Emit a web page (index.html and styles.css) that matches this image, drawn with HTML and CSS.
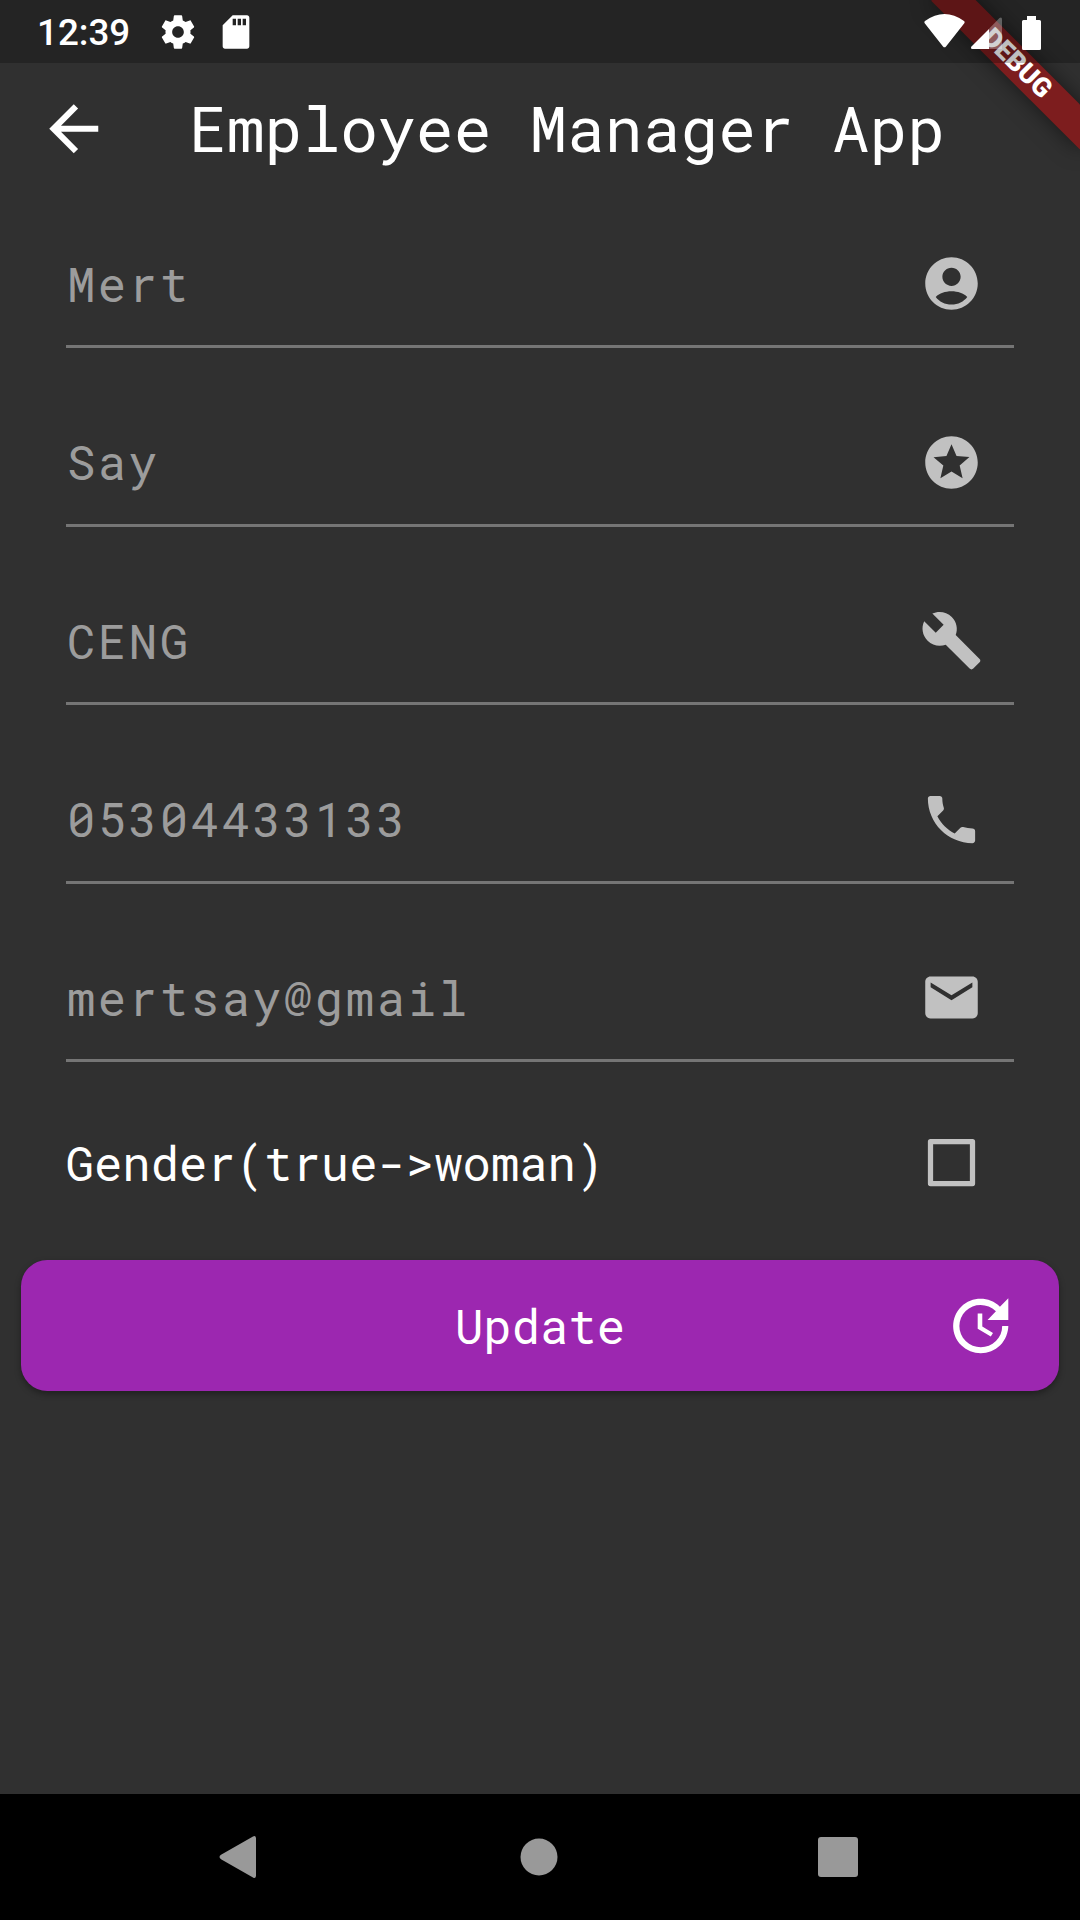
FILE: index.html
```html
<!DOCTYPE html>
<html lang="en">
<head>
<meta charset="utf-8">
<title>Employee Manager App</title>
<link rel="stylesheet" href="styles.css">
</head>
<body>
<div class="screen">
  <header class="status-bar">
    <span class="clock">12:39</span>
    <svg class="status-icon gear" viewBox="0 0 24 24"><path d="M19.43 12.98c.04-.32.07-.64.07-.98s-.03-.66-.07-.98l2.11-1.65c.19-.15.24-.42.12-.64l-2-3.46c-.12-.22-.39-.3-.61-.22l-2.49 1c-.52-.4-1.08-.73-1.69-.98l-.38-2.65C14.46 2.18 14.25 2 14 2h-4c-.25 0-.46.18-.49.42l-.38 2.65c-.61.25-1.17.59-1.69.98l-2.49-1c-.23-.09-.49 0-.61.22l-2 3.46c-.13.22-.07.49.12.64l2.11 1.65c-.04.32-.07.65-.07.98s.03.66.07.98l-2.11 1.65c-.19.15-.24.42-.12.64l2 3.46c.12.22.39.3.61.22l2.49-1c.52.4 1.08.73 1.69.98l.38 2.65c.03.24.24.42.49.42h4c.25 0 .46-.18.49-.42l.38-2.65c.61-.25 1.17-.59 1.69-.98l2.49 1c.23.09.49 0 .61-.22l2-3.46c.12-.22.07-.49-.12-.64l-2.11-1.65zM12 15.500c-1.930 0-3.500-1.570-3.500-3.500s1.570-3.500 3.500-3.500 3.500 1.570 3.500 3.500-1.570 3.500-3.500 3.500z"/></svg>
    <svg class="status-icon card" viewBox="0 0 24 24"><path d="M18.600 2H10L4 8v12.600c0 .8.6 1.400 1.400 1.400h13.200c.8 0 1.400-.6 1.400-1.400V3.400c0-.8-.6-1.400-1.400-1.400zM12 8h-2V4h2v4zm3 0h-2V4h2v4zm3 0h-2V4h2v4z"/></svg>
    <svg class="system-icons" viewBox="0 0 120 40"><path d="M4.700 11.200Q3.700 10 5 9 24.500-5 44 9q1.300 1 .3 2.200L26 34.500q-1.500 1.700-3 0z"/><path class="faint" d="M69 16.800 79.500 6q2.500-1.500 2.500 1.500V37H69z"/><path d="M69 17v20H52.500q-2.500-.5-1-2.500z"/><path d="M107 4h9v4h3.500q1.500 0 1.500 1.500v27q0 1.500-1.500 1.500h-16q-1.500 0-1.500-1.500v-27q0-1.500 1.500-1.500h3.500z"/></svg>
  </header>

  <div class="app-bar">
    <svg class="back" viewBox="0 0 24 24"><path d="M20 11H7.830l5.590-5.590L12 4l-8 8 8 8 1.410-1.410L7.830 13H20v-2z"/></svg>
    <h1 class="title">Employee Manager App</h1>
  </div>

  <main class="form">
    <div class="fields">
      <div class="field"><span class="value">Mert</span><svg class="icon" viewBox="0 0 24 24"><path d="M12 2C6.480 2 2 6.480 2 12s4.480 10 10 10 10-4.480 10-10S17.520 2 12 2zm0 4.020c1.930 0 3.480 1.540 3.480 3.440S13.930 12.930 12 12.930 8.520 11.380 8.520 9.470 10.070 6.020 12 6.020zM12 20c-2.500 0-4.710-1.130-6-2.880 1.400-1.350 3.600-2.140 6-2.140s4.600.79 6 2.140C16.710 18.870 14.500 20 12 20z"/></svg></div>
      <div class="field"><span class="value">Say</span><svg class="icon" viewBox="0 0 24 24"><path d="M11.990 2C6.470 2 2 6.480 2 12s4.470 10 9.990 10C17.520 22 22 17.520 22 12S17.520 2 11.990 2zm4.240 16L12 15.450 7.770 18l1.120-4.810-3.730-3.230 4.920-.42L12 5l1.920 4.530 4.920.42-3.730 3.230L16.230 18z"/></svg></div>
      <div class="field"><span class="value">CENG</span><svg class="icon" viewBox="0 0 24 24"><path d="M22.700 19l-9.100-9.100c.9-2.300.4-5-1.500-6.900-2-2-5-2.400-7.400-1.300L9 6 6 9 1.600 4.700C.4 7.100.9 10.100 2.900 12.100c1.900 1.900 4.600 2.400 6.900 1.500l9.100 9.100c.4.4 1 .4 1.400 0l2.300-2.300c.5-.4.5-1.100.1-1.400z"/></svg></div>
      <div class="field"><span class="value">05304433133</span><svg class="icon" viewBox="0 0 24 24"><path d="M20 15.450c-1.210-.05-2.400-.25-3.570-.57-.35-.11-.74-.03-1.020.24L13.210 17.320C10.380 15.880 8.060 13.570 6.620 10.740L8.820 8.570c.28-.28.36-.67.25-1.020C8.700 6.450 8.500 5.250 8.500 4c0-.55-.45-1-1-1H4c-.55 0-1 .45-1 1 0 9.390 7.610 17 17 17 .55 0 1-.45 1-1v-3.550c0-.55-.45-1-1-1z"/></svg></div>
      <div class="field"><span class="value">mertsay@gmail</span><svg class="icon" viewBox="0 0 24 24"><path d="M20 4H4c-1.100 0-2 .9-2 2v12c0 1.100.9 2 2 2h16c1.100 0 2-.9 2-2V6c0-1.100-.9-2-2-2zm-.05 4.100L12 13 4.050 8.100V6.250L12 11.100l7.950-4.850z"/></svg></div>
    </div>
    <div class="gender">
      <span class="label">Gender(true-&gt;woman)</span>
      <svg class="icon" viewBox="0 0 24 24"><path fill-rule="evenodd" d="M4 3h16q1 0 1 1v16q0 1-1 1H4q-1 0-1-1V4q0-1 1-1zm1 2v14h14V5z"/></svg>
    </div>
  </main>

  <div class="actions">
    <button class="update" type="button">
      <span class="update-text">Update</span>
      <svg class="update-icon" viewBox="0 0 24 24"><path d="M21 10.120h-6.780l2.740-2.820c-2.730-2.700-7.150-2.800-9.880-.1-2.730 2.710-2.730 7.080 0 9.790s7.150 2.710 9.880 0C18.320 15.650 19 14.080 19 12.100h2c0 1.980-.88 4.550-2.640 6.290-3.510 3.480-9.210 3.480-12.720 0-3.500-3.470-3.530-9.110-.02-12.580s9.140-3.470 12.650 0L21 3v7.120zM12.500 8v4.250l3.500 2.080-.72 1.210L11 13V8h1.500z"/></svg>
    </button>
  </div>

  <nav class="nav-bar">
    <svg class="nav-icon" viewBox="0 0 48 48"><path d="M40 5v38q-.5 3-3 1.500L5 26.200q-3-2.200 0-4.400L37 3.500Q39.500 2 40 5z"/></svg>
    <svg class="nav-icon" viewBox="0 0 48 48"><circle cx="24" cy="24" r="18.500"/></svg>
    <svg class="nav-icon" viewBox="0 0 48 48"><rect x="4" y="4" width="40" height="40" rx="3"/></svg>
  </nav>

  <div class="debug-banner">DEBUG</div>
</div>
</body>
</html>
```

FILE: styles.css
```css
* {
  box-sizing: border-box;
}

body {
  margin: 0;
  background: #303030;
}

svg {
  display: block;
  flex: none;
  fill: currentColor;
}

.screen {
  position: relative;
  display: flex;
  flex-direction: column;
  width: 1080px;
  height: 1920px;
  overflow: hidden;
  background: #303030;
  color: #fff;
  font-family: "Roboto Mono", "DejaVu Sans Mono", monospace;
  font-size: 47.250px;
}

.status-bar {
  position: relative;
  z-index: 2;
  display: flex;
  align-items: center;
  height: 63px;
  padding: 0 38px 0 37px;
  background: rgba(0, 0, 0, 0.25);
}

.clock {
  width: 121px;
  padding-top: 3px;
  font: 500 36.750px/44px Roboto, sans-serif;
}

.status-icon {
  width: 40px;
  height: 40px;
}

.card {
  margin-left: 18px;
}

.system-icons {
  width: 120px;
  height: 40px;
  margin-left: auto;
  margin-right: 2px;
  overflow: visible;
}

.faint {
  opacity: 0.3;
}

.app-bar {
  display: flex;
  align-items: center;
  height: 131px;
  padding-left: 36.750px;
}

.back {
  width: 73.500px;
  height: 73.500px;
}

.title {
  margin: 0 0 0 78.750px;
  padding-bottom: 1px;
  font-size: 63px;
  font-weight: 400;
  line-height: 80px;
  white-space: nowrap;
}

.form {
  padding: 49px 65.600px 0;
}

.fields {
  display: grid;
  gap: 73.500px;
}

.field {
  display: flex;
  align-items: center;
  justify-content: space-between;
  height: 105px;
  padding: 0 31.500px 21px 1.300px;
  border-bottom: 3px solid #757575;
  color: #c1c1c1;
}

.value {
  color: #9c9c9c;
  line-height: 60px;
  letter-spacing: 2.625px;
}

.icon {
  width: 63px;
  height: 63px;
}

.gender {
  display: flex;
  align-items: center;
  justify-content: space-between;
  height: 105px;
  margin-top: 48px;
  padding-right: 31.500px;
  color: #c1c1c1;
}

.label {
  color: #fff;
  line-height: 60px;
}

.actions {
  flex: 1;
  padding: 45px 21px 0;
}

.update {
  display: grid;
  grid-template-columns: 1fr auto 1fr;
  align-items: center;
  width: 100%;
  height: 131px;
  padding: 0 42px;
  border: 0;
  border-radius: 26.250px;
  background: #9c27b0;
  box-shadow: 0 3px 6px rgba(0, 0, 0, 0.35);
  color: #fff;
  font: inherit;
}

.update-text {
  grid-column: 2;
  line-height: 60px;
}

.update-icon {
  justify-self: end;
  width: 73.500px;
  height: 73.500px;
}

.nav-bar {
  display: flex;
  align-items: center;
  justify-content: space-between;
  height: 126px;
  padding: 0 218px 1px 216px;
  background: #000;
  color: #999;
}

.nav-icon {
  width: 48px;
  height: 48px;
}

/* Diagonal ribbon across the top right corner */
.debug-banner {
  position: absolute;
  top: 73.500px;
  left: 975px;
  z-index: 1;
  width: 210px;
  height: 31.500px;
  background: #7d1d1e;
  box-shadow: 0 0 21px rgba(0, 0, 0, 0.5);
  font: 900 26.800px/31.500px Roboto, sans-serif;
  text-align: center;
  transform: rotate(45deg);
  transform-origin: 105px -73.500px;
}
```
